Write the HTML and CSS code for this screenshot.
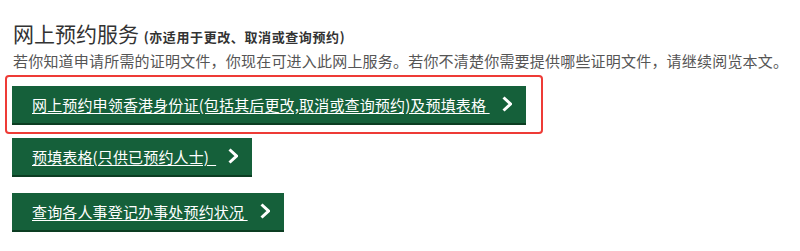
FILE: index.html
```html
<!DOCTYPE html>
<html lang="zh-CN">
<head>
<meta charset="utf-8">
<link rel="stylesheet" href="styles.css">
</head>
<body>
<div class="page">
  <h2 class="title">网上预约服务 <span class="sub">(亦适用于更改、取消或查询预约)</span></h2>
  <p class="intro">若你知道申请所需的证明文件，你现在可进入此网上服务。若你不清楚你需要提供哪些证明文件，请继续阅览本文。</p>
  <div class="highlight">
    <a class="btn" href="#"><span class="label">网上预约申领香港身份证(包括其后更改,取消或查询预约)及预填表格&nbsp;</span><svg class="chev" viewBox="0 0 10 16" width="10" height="16"><polyline points="1.5,1.5 8.5,8 1.5,14.5"/></svg></a>
  </div>
  <div class="row"><a class="btn" href="#"><span class="label">预填表格(只供已预约人士)&nbsp;&nbsp;</span><svg class="chev" viewBox="0 0 10 16" width="10" height="16"><polyline points="1.5,1.5 8.5,8 1.5,14.5"/></svg></a></div>
  <div class="row"><a class="btn" href="#"><span class="label">查询各人事登记办事处预约状况&nbsp;</span><svg class="chev" viewBox="0 0 10 16" width="10" height="16"><polyline points="1.5,1.5 8.5,8 1.5,14.5"/></svg></a></div>
</div>
</body>
</html>
```

FILE: styles.css
```css
html, body {
  margin: 0;
  padding: 0;
  background: #ffffff;
}
.page {
  padding: 19px 0 0 12px;
  font-family: "Noto Sans CJK SC", "Noto Sans", sans-serif;
}
.title {
  margin: 0 0 0 1px;
  font-size: 21px;
  line-height: 28px;
  font-weight: normal;
  color: #333333;
}
.sub {
  font-size: 13px;
  line-height: 1;
  font-weight: bold;
  letter-spacing: 0.6px;
  color: #333333;
}
.intro {
  margin: 3px 0 0 1px;
  font-size: 15px;
  line-height: 22px;
  letter-spacing: 0.2px;
  color: #555555;
}
.highlight {
  margin: 3px 0 0 -7px;
  width: fit-content;
  border: 2px solid #ee3b36;
  border-radius: 4px;
  padding: 9px 15px 7px 5px;
}
.row {
  margin-top: 4px;
}
.row + .row {
  margin-top: 16px;
}
.btn {
  display: inline-flex;
  align-items: center;
  box-sizing: border-box;
  height: 39px;
  padding: 0 14px 1px 20px;
  background: #15603a;
  border-bottom: 2px solid #0c3d22;
  color: #ffffff;
  font-size: 15px;
  letter-spacing: 0.15px;
  text-decoration: none;
}
.label {
  text-decoration: underline;
  text-underline-offset: 2px;
  white-space: nowrap;
}
.chev {
  margin-left: 12px;
  flex: none;
}
.chev polyline {
  fill: none;
  stroke: #ffffff;
  stroke-width: 3;
  stroke-linejoin: miter;
  stroke-linecap: butt;
}
```
